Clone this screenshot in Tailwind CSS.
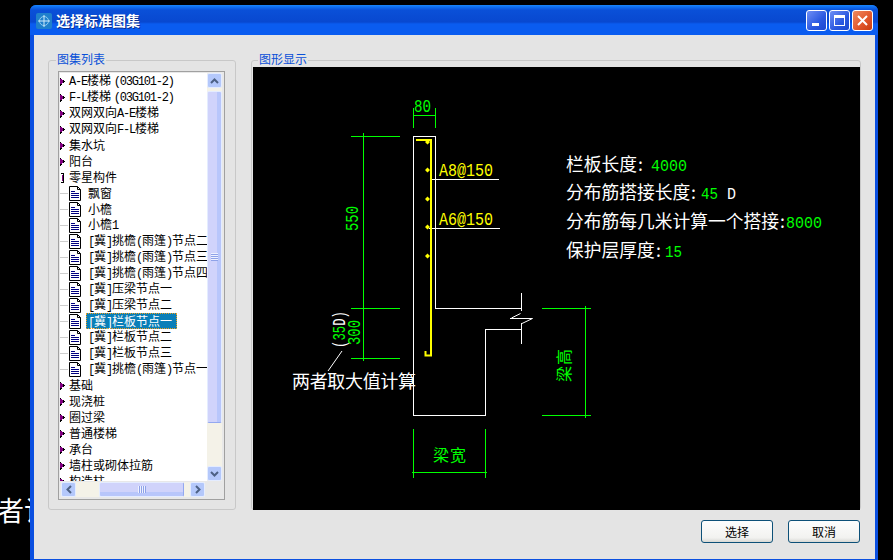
<!DOCTYPE html>
<html lang="zh">
<head>
    <meta charset="UTF-8">
    <title>选择标准图集</title>
    <script src="https://cdn.jsdelivr.net/npm/@tailwindcss/browser@4"></script>
</head>
<body class="bg-black">
    <svg width="0" height="0" class="absolute">
        <symbol id="closed" viewBox="0 0 9 16"><g transform="translate(-2 0)"><path d="M2 5h1v1h1v1h1v1h1v1h-1v1h-1v1h-1v1h-1z" fill="#800080"/><path d="M2 5v1h1v-1zM5 7h1v1h1v1h-1v1h-1zM2 11h2v1h-1v1h-1z" fill="#000"/></g></symbol>
        <symbol id="open" viewBox="0 0 9 16"><g transform="translate(-1 0)"><path d="M2 4h3v10h-3v-1h2v-8h-2z" fill="#000"/><path d="M3 6h1v6h-1z" fill="#800080"/></g></symbol>
        <symbol id="doc" viewBox="0 0 22 16"><path d="M0.500 8.500h8" stroke="#9a9a9a" stroke-dasharray="1 1" fill="none"/><path d="M9.500 1.500h8l3 3v11h-11z" fill="#fff" stroke="#000"/><path d="M17.500 1.500v3h3" fill="none" stroke="#000"/><path d="M11 6.500h4M11 8.500h8M11 10.500h8M11 12.500h8" stroke="#000080" fill="none"/></symbol>
    </svg>

    <div class="relative w-[893px] h-[560px] overflow-hidden bg-black pt-[5px] pl-[30px] font-['Noto_Sans_CJK_SC',sans-serif] text-[12px] leading-4 text-black">
        <!-- text of the window underneath -->
        <div class="absolute left-[-3px] top-[494px] text-[27px] leading-8 text-white">者计</div>

        <div class="relative w-[848px] h-[555px] flex flex-col rounded-t-[6px] bg-[#0a4fe0] overflow-hidden">
            <!-- title bar -->
            <div class="h-[30px] flex items-center pl-[6px] pr-[5px] bg-[linear-gradient(#1a86fb_0,#0f6ef0_2px,#0a50d8_5px,#0848d0_17px,#0a5cf0_19px,#0a5cf0_100%)]">
                <svg width="16" height="16" viewBox="0 0 16 16" class="mt-[1px]">
                    <rect width="16" height="16" rx="2" fill="#1f80cc"/>
                    <circle cx="8" cy="8" r="4.500" fill="none" stroke="#8fcdf0"/>
                    <path d="M8 2v12M2 8h12" stroke="#cfeafa"/>
                </svg>
                <span class="ml-1 text-[14px] font-bold text-white [text-shadow:1px_1px_0_#0a2f90]">选择标准图集</span>
                <div class="ml-auto flex gap-[2px] mt-[1px]">
                    <div class="relative w-[21px] h-[21px] rounded-[3px] border border-white bg-[linear-gradient(135deg,#6f8ff5,#2a58e0_60%,#1c48d0)]">
                        <div class="absolute left-[5px] bottom-[4px] w-[7px] h-[3px] bg-white"></div>
                    </div>
                    <div class="flex items-center justify-center w-[21px] h-[21px] rounded-[3px] border border-white bg-[linear-gradient(135deg,#6f8ff5,#2a58e0_60%,#1c48d0)]">
                        <div class="w-[11px] h-[11px] border border-white border-t-[3px]"></div>
                    </div>
                    <div class="flex items-center justify-center w-[21px] h-[21px] rounded-[3px] border border-white bg-[linear-gradient(135deg,#f08a60,#e0552a_60%,#c83c10)]">
                        <svg width="11" height="11" viewBox="0 0 11 11"><path d="M1 1l9 9M10 1l-9 9" stroke="#fff" stroke-width="2"/></svg>
                    </div>
                </div>
            </div>

            <!-- dialog body -->
            <div class="ml-[4px] mr-[3px] h-[524px] bg-[#e4e4e4] flex flex-col pt-[25px] pl-[14px]">
                <div class="flex gap-[15px]">
                    <!-- tree group -->
                    <div class="relative w-[188px] h-[450px] border border-[#c8c8c8] rounded-[3px] pt-[10px] pl-[9px]">
                        <span class="absolute left-[7px] top-[-10px] px-[1px] bg-[#e4e4e4] text-[#0a50d8]">图集列表</span>
                        <div class="w-[167px] h-[429px] border border-[#a0a0a0] p-[1px] bg-[#e8e8e8]">
                            <div class="flex h-[408px]">
                                <div class="w-[147px] h-[408px] bg-white overflow-hidden whitespace-nowrap">
                                    <div class="flex items-center h-4"><svg width="9" height="16" class="shrink-0"><use href="#closed"/></svg><span><span class="font-['Liberation_Mono'] tracking-[-1.2px]">A-E</span>楼梯 <span class="font-['Liberation_Mono'] tracking-[-1.2px]">(03G101-2)</span></span></div>
                                    <div class="flex items-center h-4"><svg width="9" height="16" class="shrink-0"><use href="#closed"/></svg><span><span class="font-['Liberation_Mono'] tracking-[-1.2px]">F-L</span>楼梯 <span class="font-['Liberation_Mono'] tracking-[-1.2px]">(03G101-2)</span></span></div>
                                    <div class="flex items-center h-4"><svg width="9" height="16" class="shrink-0"><use href="#closed"/></svg><span>双网双向<span class="font-['Liberation_Mono'] tracking-[-1.2px]">A-E</span>楼梯</span></div>
                                    <div class="flex items-center h-4"><svg width="9" height="16" class="shrink-0"><use href="#closed"/></svg><span>双网双向<span class="font-['Liberation_Mono'] tracking-[-1.2px]">F-L</span>楼梯</span></div>
                                    <div class="flex items-center h-4"><svg width="9" height="16" class="shrink-0"><use href="#closed"/></svg><span>集水坑</span></div>
                                    <div class="flex items-center h-4"><svg width="9" height="16" class="shrink-0"><use href="#closed"/></svg><span>阳台</span></div>
                                    <div class="flex items-center h-4"><svg width="9" height="16" class="shrink-0"><use href="#open"/></svg><span>零星构件</span></div>
                                    <div class="flex items-center h-4"><svg width="22" height="16" class="shrink-0"><use href="#doc"/></svg><span class="ml-[6px]">飘窗</span></div>
                                    <div class="flex items-center h-4"><svg width="22" height="16" class="shrink-0"><use href="#doc"/></svg><span class="ml-[6px]">小檐</span></div>
                                    <div class="flex items-center h-4"><svg width="22" height="16" class="shrink-0"><use href="#doc"/></svg><span class="ml-[6px]">小檐<span class="font-['Liberation_Mono'] tracking-[-1.2px]">1</span></span></div>
                                    <div class="flex items-center h-4"><svg width="22" height="16" class="shrink-0"><use href="#doc"/></svg><span class="ml-[6px]"><span class="font-['Liberation_Mono'] tracking-[-1.2px]">[</span>冀<span class="font-['Liberation_Mono'] tracking-[-1.2px]">]</span>挑檐<span class="font-['Liberation_Mono'] tracking-[-1.2px]">(</span>雨篷<span class="font-['Liberation_Mono'] tracking-[-1.2px]">)</span>节点二</span></div>
                                    <div class="flex items-center h-4"><svg width="22" height="16" class="shrink-0"><use href="#doc"/></svg><span class="ml-[6px]"><span class="font-['Liberation_Mono'] tracking-[-1.2px]">[</span>冀<span class="font-['Liberation_Mono'] tracking-[-1.2px]">]</span>挑檐<span class="font-['Liberation_Mono'] tracking-[-1.2px]">(</span>雨篷<span class="font-['Liberation_Mono'] tracking-[-1.2px]">)</span>节点三</span></div>
                                    <div class="flex items-center h-4"><svg width="22" height="16" class="shrink-0"><use href="#doc"/></svg><span class="ml-[6px]"><span class="font-['Liberation_Mono'] tracking-[-1.2px]">[</span>冀<span class="font-['Liberation_Mono'] tracking-[-1.2px]">]</span>挑檐<span class="font-['Liberation_Mono'] tracking-[-1.2px]">(</span>雨篷<span class="font-['Liberation_Mono'] tracking-[-1.2px]">)</span>节点四</span></div>
                                    <div class="flex items-center h-4"><svg width="22" height="16" class="shrink-0"><use href="#doc"/></svg><span class="ml-[6px]"><span class="font-['Liberation_Mono'] tracking-[-1.2px]">[</span>冀<span class="font-['Liberation_Mono'] tracking-[-1.2px]">]</span>压梁节点一</span></div>
                                    <div class="flex items-center h-4"><svg width="22" height="16" class="shrink-0"><use href="#doc"/></svg><span class="ml-[6px]"><span class="font-['Liberation_Mono'] tracking-[-1.2px]">[</span>冀<span class="font-['Liberation_Mono'] tracking-[-1.2px]">]</span>压梁节点二</span></div>
                                    <div class="flex items-center h-4"><svg width="22" height="16" class="shrink-0"><use href="#doc"/></svg><span class="ml-[4px] pl-[2px] w-[91px] h-4 bg-[#0a7fb8] text-white outline-1 outline-dotted -outline-offset-1 outline-[#f0a020]"><span class="font-['Liberation_Mono'] tracking-[-1.2px]">[</span>冀<span class="font-['Liberation_Mono'] tracking-[-1.2px]">]</span>栏板节点一</span></div>
                                    <div class="flex items-center h-4"><svg width="22" height="16" class="shrink-0"><use href="#doc"/></svg><span class="ml-[6px]"><span class="font-['Liberation_Mono'] tracking-[-1.2px]">[</span>冀<span class="font-['Liberation_Mono'] tracking-[-1.2px]">]</span>栏板节点二</span></div>
                                    <div class="flex items-center h-4"><svg width="22" height="16" class="shrink-0"><use href="#doc"/></svg><span class="ml-[6px]"><span class="font-['Liberation_Mono'] tracking-[-1.2px]">[</span>冀<span class="font-['Liberation_Mono'] tracking-[-1.2px]">]</span>栏板节点三</span></div>
                                    <div class="flex items-center h-4"><svg width="22" height="16" class="shrink-0"><use href="#doc"/></svg><span class="ml-[6px]"><span class="font-['Liberation_Mono'] tracking-[-1.2px]">[</span>冀<span class="font-['Liberation_Mono'] tracking-[-1.2px]">]</span>挑檐<span class="font-['Liberation_Mono'] tracking-[-1.2px]">(</span>雨篷<span class="font-['Liberation_Mono'] tracking-[-1.2px]">)</span>节点一</span></div>
                                    <div class="flex items-center h-4"><svg width="9" height="16" class="shrink-0"><use href="#closed"/></svg><span>基础</span></div>
                                    <div class="flex items-center h-4"><svg width="9" height="16" class="shrink-0"><use href="#closed"/></svg><span>现浇桩</span></div>
                                    <div class="flex items-center h-4"><svg width="9" height="16" class="shrink-0"><use href="#closed"/></svg><span>圈过梁</span></div>
                                    <div class="flex items-center h-4"><svg width="9" height="16" class="shrink-0"><use href="#closed"/></svg><span>普通楼梯</span></div>
                                    <div class="flex items-center h-4"><svg width="9" height="16" class="shrink-0"><use href="#closed"/></svg><span>承台</span></div>
                                    <div class="flex items-center h-4"><svg width="9" height="16" class="shrink-0"><use href="#closed"/></svg><span>墙柱或砌体拉筋</span></div>
                                    <div class="flex items-center h-4"><svg width="9" height="16" class="shrink-0"><use href="#closed"/></svg><span>构造柱</span></div>
                                </div>
                                <!-- vertical scrollbar -->
                                <div class="w-[15px] flex flex-col bg-[#f4f2e8]">
                                    <div class="flex items-center justify-center h-[15px] rounded-[2px] border border-[#e4ecff] bg-[#b4c8fb]">
                                        <svg width="9" height="6" viewBox="0 0 9 6"><path d="M1 5l3.500-3.500L8 5" fill="none" stroke="#4d6185" stroke-width="2"/></svg>
                                    </div>
                                    <div class="mt-[3px] h-[332px] rounded-[2px] border border-[#e4ecff] border-b-[#93a8f0] bg-[linear-gradient(90deg,#d0d3fb_70%,#b8c6fb_70%)] flex items-center justify-center">
                                        <div class="w-[7px] h-[8px] bg-[repeating-linear-gradient(#eef1ff_0,#eef1ff_1px,#8ea2e8_1px,#8ea2e8_2px)]"></div>
                                    </div>
                                    <div class="flex-1"></div>
                                    <div class="flex items-center justify-center h-[15px] rounded-[2px] border border-[#e4ecff] bg-[#b4c8fb]">
                                        <svg width="9" height="6" viewBox="0 0 9 6"><path d="M1 1l3.500 3.500L8 1" fill="none" stroke="#4d6185" stroke-width="2"/></svg>
                                    </div>
                                </div>
                            </div>
                            <!-- horizontal scrollbar -->
                            <div class="flex h-[15px] mt-[1px] w-[144px] ml-[1px] bg-[#f4f2e8]">
                                <div class="flex items-center justify-center w-[15px] rounded-[2px] border border-[#e4ecff] bg-[#b4c8fb]">
                                    <svg width="6" height="9" viewBox="0 0 6 9"><path d="M5 1L1.500 4.500 5 8" fill="none" stroke="#4d6185" stroke-width="2"/></svg>
                                </div>
                                <div class="ml-[23px] w-[85px] rounded-[2px] border border-[#e4ecff] border-r-[#93a8f0] bg-[linear-gradient(#d0d3fb_70%,#b8c6fb_70%)] flex items-center justify-center">
                                    <div class="w-[8px] h-[7px] bg-[repeating-linear-gradient(90deg,#eef1ff_0,#eef1ff_1px,#8ea2e8_1px,#8ea2e8_2px)]"></div>
                                </div>
                                <div class="ml-auto flex items-center justify-center w-[15px] rounded-[2px] border border-[#e4ecff] bg-[#b4c8fb]">
                                    <svg width="6" height="9" viewBox="0 0 6 9"><path d="M1 1l3.500 3.500L1 8" fill="none" stroke="#4d6185" stroke-width="2"/></svg>
                                </div>
                            </div>
                        </div>
                    </div>

                    <!-- drawing group -->
                    <div class="relative w-[610px] h-[450px] border border-[#c8c8c8] rounded-[3px] pt-[6px] pl-[1px]">
                        <span class="absolute left-[6px] top-[-10px] px-[1px] bg-[#e4e4e4] text-[#0a50d8]">图形显示</span>
                        <svg width="607" height="443" viewBox="253 67 607 443" class="block bg-black">
                            <!-- concrete outline -->
                            <g fill="none" stroke="#fff" shape-rendering="crispEdges">
                                <path d="M413.500 415.500V136.500H435.500V308.500H521.500"/>
                                <path d="M521.500 293V311M521.500 323V344"/>
                                <path d="M521.500 329.500H485.500V415.500H413.500"/>
                                <path d="M432 179.500H499M429 228.500H500"/>
                            </g>
                            <path d="M510 318.500H532.500M520.500 313.500L511.500 318M532.500 318.500L522 323.500M342 351L328 371" fill="none" stroke="#fff"/>
                            <!-- rebar -->
                            <path d="M416 140H431V355.500H425.500V351" fill="none" stroke="#ff0" stroke-width="2"/>
                            <path d="M427.500 139.500l2.500 2.500-2.500 2.500-2.500-2.500zM427.500 167.500l2.500 2.500-2.500 2.500-2.500-2.500zM427.500 196.500l2.500 2.500-2.500 2.500-2.500-2.500zM427.500 224.500l2.500 2.500-2.500 2.500-2.500-2.500zM427.500 253.500l2.500 2.500-2.500 2.500-2.500-2.500z" fill="#ff0"/>
                            <!-- dimension lines -->
                            <g fill="none" stroke="#0f0" shape-rendering="crispEdges">
                                <path d="M413.500 108V128M435.500 108V128M413 115.500H436"/>
                                <path d="M351 136.500H400M351 308.500H400M351 358.500H400M363.500 133V361"/>
                                <path d="M542 308.500H591M542 415.500H591M585.500 306V418"/>
                                <path d="M413.500 429V478M485.500 429V478M412 472.500H487"/>
                            </g>
                            <g font-family="'Liberation Mono',monospace" fill="#0f0">
                                <text x="414" y="112" font-size="18" textLength="17" lengthAdjust="spacingAndGlyphs">80</text>
                                <text transform="translate(358 231) rotate(-90)" font-size="18" textLength="25" lengthAdjust="spacingAndGlyphs">550</text>
                                <text transform="translate(360 345) rotate(-90)" font-size="18" textLength="25" lengthAdjust="spacingAndGlyphs">300</text>
                                <text transform="translate(345 348) rotate(-90)" font-size="18" textLength="37" lengthAdjust="spacingAndGlyphs"><tspan fill="#fff">(</tspan>35<tspan fill="#fff">D)</tspan></text>
                                <text x="439" y="176" font-size="18" fill="#ff0" textLength="54" lengthAdjust="spacingAndGlyphs">A8@150</text>
                                <text x="439" y="225" font-size="18" fill="#ff0" textLength="54" lengthAdjust="spacingAndGlyphs">A6@150</text>
                            </g>
                            <text x="292" y="388" font-size="18" fill="#fff" textLength="124">两者取大值计算</text>
                            <text x="433" y="461" font-size="16" fill="#0f0" textLength="33">梁宽</text>
                            <text transform="translate(570 382) rotate(-90)" font-size="16" fill="#0f0" textLength="33">梁高</text>
                            <!-- parameters -->
                            <g font-size="17.750" fill="#fff">
                                <text x="566" y="171">栏板长度</text>
                                <text x="638" y="171">:</text>
                                <text x="651" y="171" fill="#0f0" font-family="'Liberation Mono',monospace" font-size="17" textLength="36" lengthAdjust="spacingAndGlyphs">4000</text>
                                <text x="566" y="199">分布筋搭接长度</text>
                                <text x="691" y="199">:</text>
                                <text x="701" y="199" fill="#0f0" font-family="'Liberation Mono',monospace" font-size="17" textLength="17" lengthAdjust="spacingAndGlyphs">45</text>
                                <text x="727" y="199" font-family="'Liberation Mono',monospace" font-size="17" textLength="9" lengthAdjust="spacingAndGlyphs">D</text>
                                <text x="566" y="228">分布筋每几米计算一个搭接</text>
                                <text x="780" y="228">:</text>
                                <text x="786" y="228" fill="#0f0" font-family="'Liberation Mono',monospace" font-size="17" textLength="36" lengthAdjust="spacingAndGlyphs">8000</text>
                                <text x="566" y="257">保护层厚度</text>
                                <text x="656" y="257">:</text>
                                <text x="665" y="257" fill="#0f0" font-family="'Liberation Mono',monospace" font-size="17" textLength="17" lengthAdjust="spacingAndGlyphs">15</text>
                            </g>
                        </svg>
                    </div>
                </div>

                <!-- buttons -->
                <div class="flex justify-end gap-[15px] mt-[10px] mr-[15px]">
                    <button class="w-[72px] h-[23px] rounded-[3px] border border-[#0d5078] bg-[linear-gradient(#fdfdfd,#f2f2f0_80%,#d8d8d4)] text-black">选择</button>
                    <button class="w-[72px] h-[23px] rounded-[3px] border border-[#0d5078] bg-[linear-gradient(#fdfdfd,#f2f2f0_80%,#d8d8d4)] text-black">取消</button>
                </div>
            </div>
        </div>
    </div>
</body>
</html>
